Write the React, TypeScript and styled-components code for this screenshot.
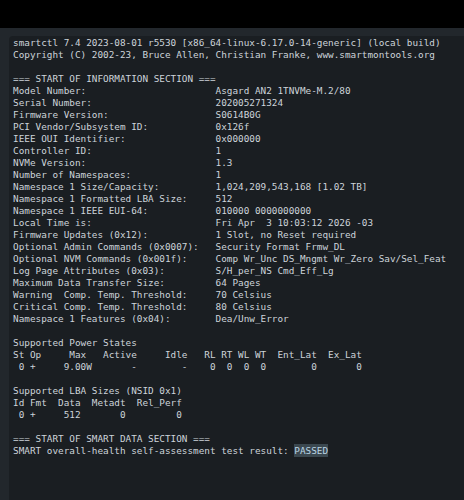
import React from "react";
import styled, { createGlobalStyle } from "styled-components";

const Global = createGlobalStyle`
  html, body { margin: 0; padding: 0; background: #22272c; }
  body { width: 464px; height: 500px; overflow: hidden; }
`;

const Page = styled.div`
  display: flex;
  flex-direction: column;
  width: 464px;
  height: 500px;
  background: #22272c;
`;

const TopBar = styled.div`
  height: 28px;
  flex: none;
  background: #000000;
`;

const Viewport = styled.div`
  flex: 1;
  display: flex;
  padding: 8px 0 0 9px;
  min-height: 0;
`;

const Panel = styled.pre`
  flex: 1;
  margin: 0;
  padding: 1px 4px 0 4px;
  background: #1a1e22;
  border-radius: 4px 0 0 0;
  color: #cdd4da;
  font-family: "DejaVu Sans Mono", monospace;
  font-size: 9.35px;
  line-height: 12px;
  white-space: pre;
  overflow: hidden;
`;

const Highlight = styled.span`
  padding: 1px 0;
  background: #3b4850;
  color: #bcd6e6;
`;

const output = `smartctl 7.4 2023-08-01 r5530 [x86_64-linux-6.17.0-14-generic] (local build)
Copyright (C) 2002-23, Bruce Allen, Christian Franke, www.smartmontools.org

=== START OF INFORMATION SECTION ===
Model Number:                       Asgard AN2 1TNVMe-M.2/80
Serial Number:                      202005271324
Firmware Version:                   S0614B0G
PCI Vendor/Subsystem ID:            0x126f
IEEE OUI Identifier:                0x000000
Controller ID:                      1
NVMe Version:                       1.3
Number of Namespaces:               1
Namespace 1 Size/Capacity:          1,024,209,543,168 [1.02 TB]
Namespace 1 Formatted LBA Size:     512
Namespace 1 IEEE EUI-64:            010000 0000000000
Local Time is:                      Fri Apr  3 10:03:12 2026 -03
Firmware Updates (0x12):            1 Slot, no Reset required
Optional Admin Commands (0x0007):   Security Format Frmw_DL
Optional NVM Commands (0x001f):     Comp Wr_Unc DS_Mngmt Wr_Zero Sav/Sel_Feat
Log Page Attributes (0x03):         S/H_per_NS Cmd_Eff_Lg
Maximum Data Transfer Size:         64 Pages
Warning  Comp. Temp. Threshold:     70 Celsius
Critical Comp. Temp. Threshold:     80 Celsius
Namespace 1 Features (0x04):        Dea/Unw_Error

Supported Power States
St Op     Max   Active     Idle   RL RT WL WT  Ent_Lat  Ex_Lat
 0 +     9.00W       -        -    0  0  0  0        0       0

Supported LBA Sizes (NSID 0x1)
Id Fmt  Data  Metadt  Rel_Perf
 0 +     512       0         0

=== START OF SMART DATA SECTION ===
SMART overall-health self-assessment test result: `;

export default function App() {
  return (
    <>
      <Global />
      <Page>
        <TopBar />
        <Viewport>
          <Panel>
            {output}
            <Highlight>PASSED</Highlight>
          </Panel>
        </Viewport>
      </Page>
    </>
  );
}
